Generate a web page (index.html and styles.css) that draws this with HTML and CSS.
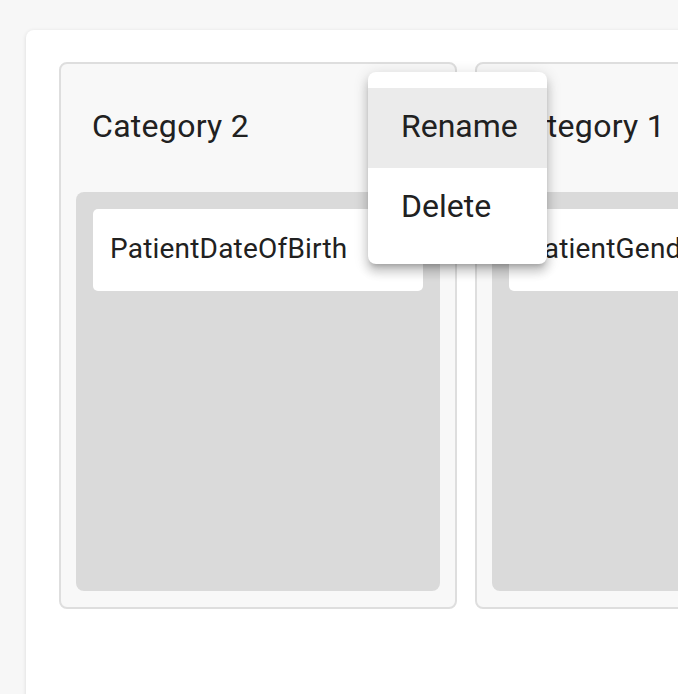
FILE: index.html
```html
<!DOCTYPE html>
<html lang="en">
<head>
  <meta charset="UTF-8">
  <meta name="viewport" content="width=device-width, initial-scale=1.0">
  <title>Categories</title>
  <link rel="stylesheet" href="styles.css">
</head>
<body>
  <div class="board">
    <div class="columns">
      <div class="column">
        <div class="column-title">Category 2</div>
        <div class="drop-zone">
          <div class="field-card">
            <span>PatientDateOfBirth</span>
          </div>
        </div>
      </div>
      <div class="column">
        <div class="column-title">Category 1</div>
        <div class="drop-zone">
          <div class="field-card">
            <span>PatientGender</span>
          </div>
        </div>
      </div>
    </div>
  </div>

  <div class="menu">
    <div class="menu-item active">Rename</div>
    <div class="menu-item">Delete</div>
  </div>
</body>
</html>
```

FILE: styles.css
```css
* {
  box-sizing: border-box;
  margin: 0;
  padding: 0;
  font-family: Roboto, 'Noto Sans', sans-serif;
}
body {
  background-color: #f7f7f7;
  color: #212121;
  height: 694px;
  overflow: hidden;
  padding: 30px 0 0 26px;
}
.board {
  background-color: #fff;
  border-radius: 8px 0 0 0;
  box-shadow: 0 1px 4px rgba(0,0,0,0.12);
  padding: 32px 0 0 33px;
  height: 700px;
  width: 700px;
}
.columns {
  display: flex;
  gap: 18px;
}
.column {
  flex: 0 0 398px;
  height: 547px;
  background-color: #f8f8f8;
  border: 2px solid #dedede;
  border-radius: 8px;
  padding: 0 15px 16px 15px;
  display: flex;
  flex-direction: column;
}
.column-title {
  font-size: 32px;
  height: 128px;
  line-height: 124px;
  padding-left: 16px;
  letter-spacing: 0.3px;
  white-space: nowrap;
}
.drop-zone {
  flex: 1;
  background-color: #dadada;
  border-radius: 8px;
  padding: 17px 17px;
}
.field-card {
  background-color: #fff;
  border-radius: 5px;
  height: 82px;
  display: flex;
  align-items: center;
  padding: 0 17px 4px;
  font-size: 28px;
  letter-spacing: 0.2px;
  white-space: nowrap;
  overflow: hidden;
}
.menu {
  position: absolute;
  left: 368px;
  top: 72px;
  width: 179px;
  background-color: #fff;
  border-radius: 8px;
  padding: 16px 0;
  box-shadow: 0 5px 5px -3px rgba(0,0,0,0.2), 0 8px 10px 1px rgba(0,0,0,0.14), 0 3px 14px 2px rgba(0,0,0,0.12);
}
.menu-item {
  height: 80px;
  line-height: 76px;
  padding-left: 33px;
  font-size: 32px;
}
.menu-item.active {
  background-color: #ebebeb;
}
```
